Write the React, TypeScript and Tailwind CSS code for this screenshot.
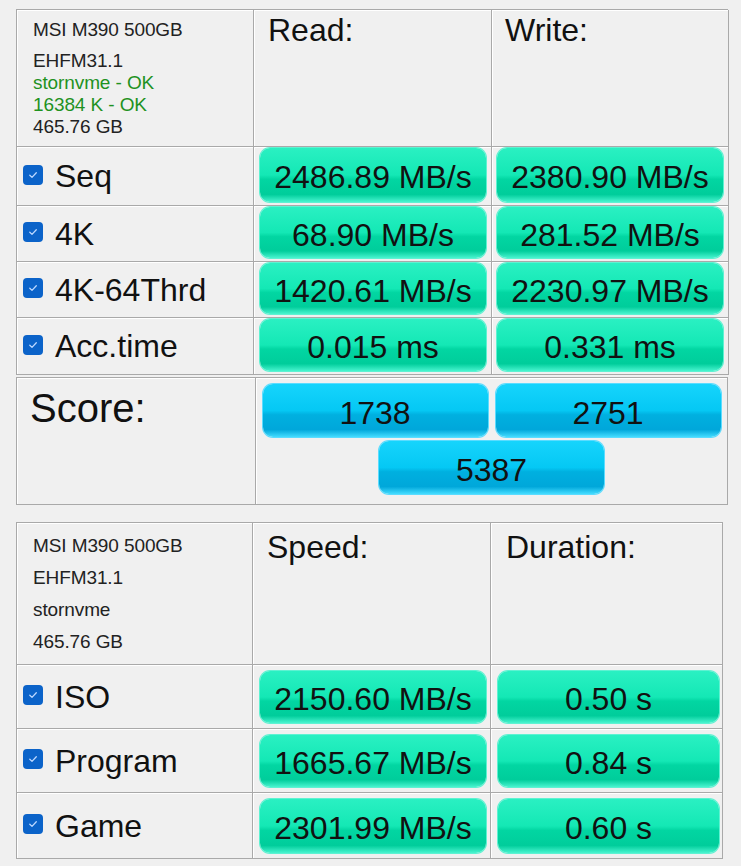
import React from "react";

const cell = "border-r border-b border-[#a9a9a9] shadow-[inset_1px_1px_0_#ffffff]";
const green =
  "bg-[linear-gradient(to_bottom,#2af0c2_0%,#14e8b5_50%,#02d6a2_58%,#00cd9b_86%,#48f4cf_100%)] shadow-[0_0_0_1px_#5ef2d2]";
const blue =
  "bg-[linear-gradient(to_bottom,#16d4fc_0%,#05c8f4_50%,#00b0e0_58%,#00a7da_86%,#44dcff_100%)] shadow-[0_0_0_1px_#5adcff]";

function Check() {
  return (
    <span className="w-[20px] h-[20px] rounded-[4px] bg-[#0b63c9] flex items-center justify-center shrink-0 -mt-[3px]">
      <svg width="12" height="12" viewBox="0 0 12 12">
        <path d="M2.8 6.3 L5 8.4 L9.3 3.8" stroke="#bcd8ff" strokeWidth="1.3" fill="none" strokeLinecap="round" strokeLinejoin="round" />
      </svg>
    </span>
  );
}

function Bar({ v, kind = "g" }: { v: string; kind?: "g" | "b" }) {
  return (
    <div
      className={`h-full w-full rounded-[10px] ${kind === "g" ? green : blue} flex items-center justify-center text-[32px] leading-none text-[#111] pt-[4px]`}
    >
      {v}
    </div>
  );
}

function Label({ t }: { t: string }) {
  return (
    <div className={`${cell} flex items-center pl-[6px] gap-[12px]`}>
      <Check />
      <span className="text-[32px] leading-none text-[#111]">{t}</span>
    </div>
  );
}

export default function App() {
  const rows1 = [
    ["Seq", "2486.89 MB/s", "2380.90 MB/s"],
    ["4K", "68.90 MB/s", "281.52 MB/s"],
    ["4K-64Thrd", "1420.61 MB/s", "2230.97 MB/s"],
    ["Acc.time", "0.015 ms", "0.331 ms"],
  ];
  const rows2 = [
    ["ISO", "2150.60 MB/s", "0.50 s"],
    ["Program", "1665.67 MB/s", "0.84 s"],
    ["Game", "2301.99 MB/s", "0.60 s"],
  ];
  return (
    <div className="w-[741px] h-[866px] bg-[#f0f0f0] font-['Liberation_Sans',Arial,sans-serif] pt-[9px] pl-[16px] overflow-hidden">
      {/* Top panel */}
      <div className="w-[712px]">
        <div className="grid grid-cols-[237px_238px_237px] grid-rows-[137px_59px_56px_56px_57px] border-t border-l border-[#a9a9a9]">
          <div className={`${cell} pl-[16px] pt-[9px] text-[19px] leading-[22px] text-[#222] tracking-[-0.1px]`}>
            <div className="mb-[9px]">MSI M390 500GB</div>
            <div>EHFM31.1</div>
            <div className="text-[#1f921f]">stornvme - OK</div>
            <div className="text-[#1f921f]">16384 K - OK</div>
            <div>465.76 GB</div>
          </div>
          <div className={`${cell} pl-[14px] pt-[2px] text-[32px] leading-[36px] text-[#111]`}>Read:</div>
          <div className={`${cell} pl-[13px] pt-[2px] text-[32px] leading-[36px] text-[#111]`}>Write:</div>
          {rows1.map((r) => (
            <React.Fragment key={r[0]}>
              <Label t={r[0]} />
              <div className={`${cell} pl-[6px] pr-[5px] pt-[1px] pb-[3px]`}>
                <Bar v={r[1]} />
              </div>
              <div className={`${cell} pl-[5px] pr-[5px] pt-[1px] pb-[3px]`}>
                <Bar v={r[2]} />
              </div>
            </React.Fragment>
          ))}
        </div>
        <div className="mt-[2px] h-[128px] border border-[#a9a9a9] flex shadow-[inset_1px_1px_0_#ffffff]">
          <div className="w-[239px] border-r border-[#a9a9a9] pl-[13px] pt-[6px] text-[40px] leading-[48px] text-[#111]">
            Score:
          </div>
          <div className="flex-1 flex flex-col items-center pt-[6px] gap-[4px] shadow-[inset_1px_0_0_#ffffff]">
            <div className="flex gap-[8px]">
              <div className="w-[225px] h-[53px]">
                <Bar v="1738" kind="b" />
              </div>
              <div className="w-[225px] h-[53px]">
                <Bar v="2751" kind="b" />
              </div>
            </div>
            <div className="w-[225px] h-[53px]">
              <Bar v="5387" kind="b" />
            </div>
          </div>
        </div>
      </div>

      {/* Bottom panel */}
      <div className="mt-[17px] w-[707px] grid grid-cols-[236px_238px_232px] grid-rows-[142px_64px_64px_66px] border-t border-l border-[#a9a9a9]">
        <div className={`${cell} pl-[16px] pt-[7px] text-[19px] leading-[32px] text-[#222] tracking-[-0.1px]`}>
          <div>MSI M390 500GB</div>
          <div>EHFM31.1</div>
          <div>stornvme</div>
          <div>465.76 GB</div>
        </div>
        <div className={`${cell} pl-[14px] pt-[6px] text-[32px] leading-[36px] text-[#111]`}>Speed:</div>
        <div className={`${cell} pl-[15px] pt-[6px] text-[32px] leading-[36px] text-[#111]`}>Duration:</div>
        {rows2.map((r) => (
          <React.Fragment key={r[0]}>
            <Label t={r[0]} />
            <div className={`${cell} pl-[7px] pr-[4px] pt-[6px] pb-[5px]`}>
              <Bar v={r[1]} />
            </div>
            <div className={`${cell} pl-[7px] pr-[3px] pt-[6px] pb-[5px]`}>
              <Bar v={r[2]} />
            </div>
          </React.Fragment>
        ))}
      </div>
    </div>
  );
}
